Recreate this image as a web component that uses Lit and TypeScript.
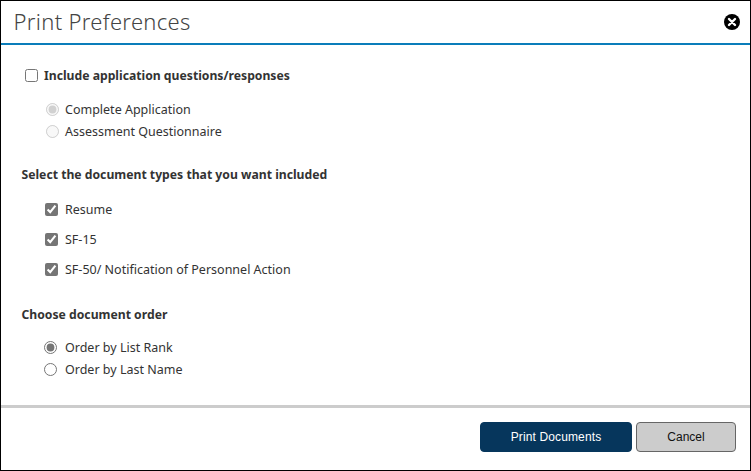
import { LitElement, html, css } from "lit";
import { customElement } from "lit/decorators.js";

@customElement("app-root")
export class AppRoot extends LitElement {
  static styles = css`
    :host {
      display: block;
      box-sizing: border-box;
      width: 751px;
      height: 471px;
      border: 1px solid #000;
      background: #fff;
      font-family: "Noto Sans", "Open Sans", sans-serif;
      color: #333;
      font-size: 12.5px;
      overflow: hidden;
    }
    .dialog { display: flex; flex-direction: column; height: 100%; }
    .header {
      height: 44px;
      box-sizing: border-box;
      border-bottom: 2px solid #0a7dba;
      display: flex;
      align-items: center;
      justify-content: space-between;
      padding: 0 10px 0 12.5px;
      flex: none;
    }
    .title { font-size: 22px; font-weight: 300; color: #444; letter-spacing: 0.32px; margin-bottom: 2px; }
    .close { width: 16px; height: 16px; display: block; }
    .body { flex: 1; padding: 0 20px; display: flex; flex-direction: column; }
    .row { display: flex; align-items: center; }
    input { margin: 0; flex: none; }
    .check { accent-color: #757575; width: 13px; height: 13px; }
    .radio { accent-color: #757575; width: 13px; height: 13px; }
    .top { height: 22px; margin-top: 19px; padding-left: 4px; gap: 6px; font-weight: 700; font-size: 12.2px; }
    .radios { display: flex; flex-direction: column; margin-top: 12px; padding-left: 25px; }
    .radios .row { height: 22px; gap: 6px; }
    .radios.order { padding-left: 23px; }
    .radios.order .row { gap: 8px; }
    .heading { font-weight: 700; font-size: 12.2px; height: 18px; line-height: 18px; padding-left: 0.5px; }
    .h1 { margin-top: 24px; }
    .h2 { margin-top: 22px; }
    .checks { display: flex; flex-direction: column; margin-top: 10px; padding-left: 24px; }
    .checks .row { height: 30px; gap: 7px; }
    .order { margin-top: 12px; }
    .footer {
      flex: none;
      height: 65px;
      box-sizing: border-box;
      border-top: 3px solid #ccc;
      display: flex;
      justify-content: flex-end;
      align-items: flex-start;
      gap: 4px;
      padding: 14px 14px 0 0;
    }
    button {
      height: 30px;
      box-sizing: border-box;
      border-radius: 4px;
      font-family: "Liberation Sans", Arial, sans-serif;
      font-size: 12px;
      padding: 0;
    }
    .primary { width: 152px; background: #06365c; color: #fff; border: 1px solid #06365c; letter-spacing: 0.13px; }
    .secondary { width: 100px; background: #ccc; color: #111; border: 1px solid #666; }
  `;

  render() {
    return html`
      <div class="dialog">
        <div class="header">
          <div class="title">Print Preferences</div>
          <svg class="close" viewBox="0 0 16 16" aria-label="Close">
            <circle cx="8" cy="8" r="8" fill="#000"></circle>
            <path d="M5 5l6 6M11 5l-6 6" stroke="#fff" stroke-width="2.4" stroke-linecap="round"></path>
          </svg>
        </div>
        <div class="body">
          <label class="row top"><input class="check" type="checkbox" />Include application questions/responses</label>
          <div class="radios">
            <label class="row"><input class="radio" type="radio" name="a" checked disabled />Complete Application</label>
            <label class="row"><input class="radio" type="radio" name="a" disabled />Assessment Questionnaire</label>
          </div>
          <div class="heading h1">Select the document types that you want included</div>
          <div class="checks">
            <label class="row"><input class="check" type="checkbox" checked />Resume</label>
            <label class="row"><input class="check" type="checkbox" checked />SF-15</label>
            <label class="row"><input class="check" type="checkbox" checked />SF-50/ Notification of Personnel Action</label>
          </div>
          <div class="heading h2">Choose document order</div>
          <div class="radios order">
            <label class="row"><input class="radio" type="radio" name="o" checked />Order by List Rank</label>
            <label class="row"><input class="radio" type="radio" name="o" />Order by Last Name</label>
          </div>
        </div>
        <div class="footer">
          <button class="primary">Print Documents</button>
          <button class="secondary">Cancel</button>
        </div>
      </div>
    `;
  }
}
